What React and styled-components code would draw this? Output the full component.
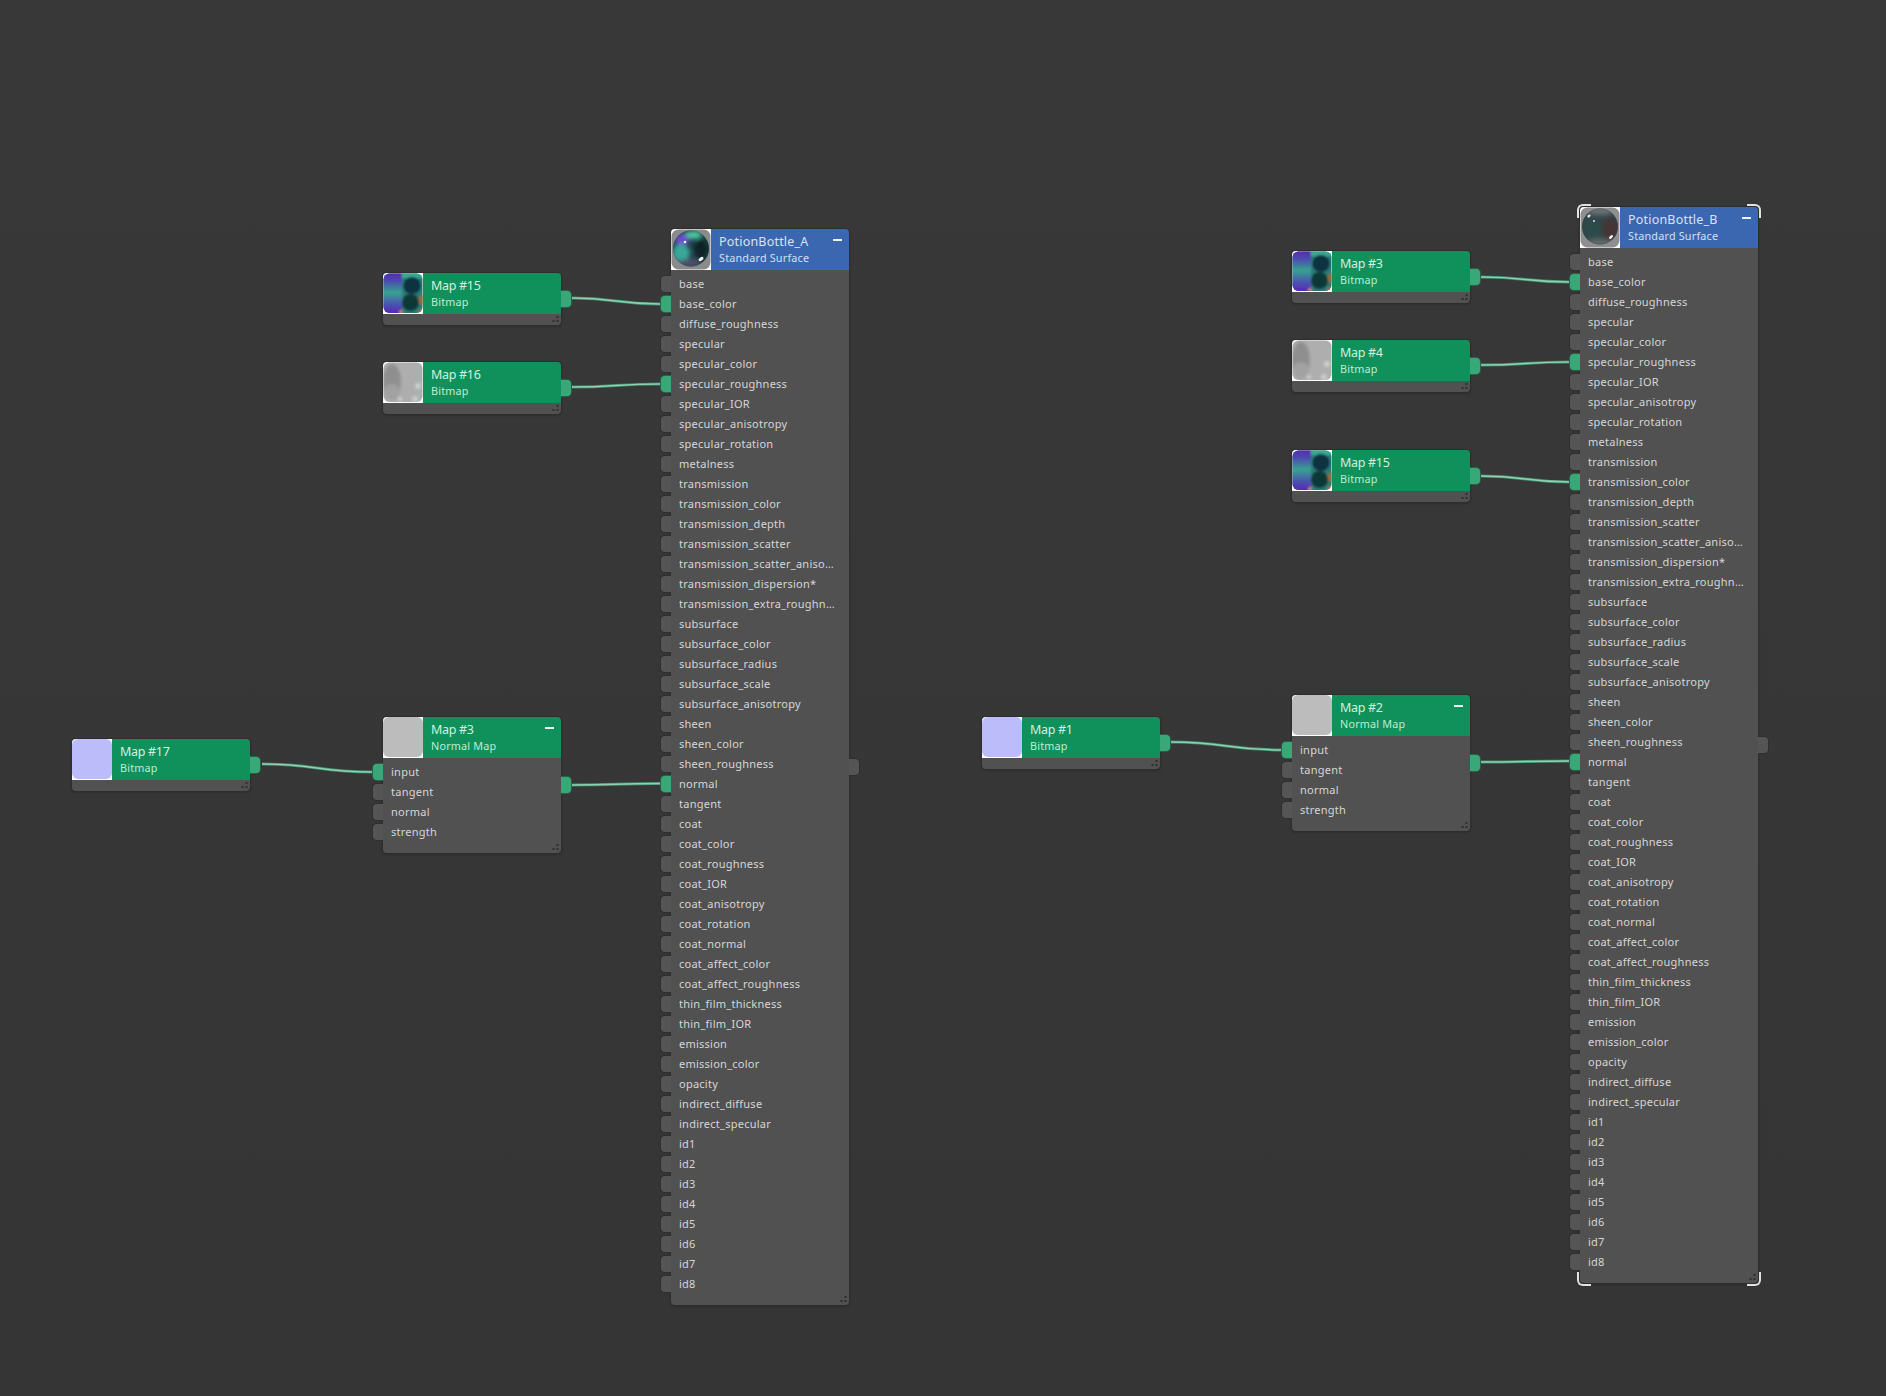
import React from "react";
import styled, { createGlobalStyle } from "styled-components";

const Global = createGlobalStyle`
  html, body { margin: 0; padding: 0; background: #363636; }
  * { box-sizing: border-box; }
`;

const Canvas = styled.div`
  position: relative;
  width: 1886px;
  height: 1396px;
  overflow: hidden;
  background: linear-gradient(#383838, #353535);
  font-family: "Noto Sans", "Open Sans", sans-serif;
`;

const WireLayer = styled.svg`
  position: absolute;
  left: 0;
  top: 0;
  width: 1886px;
  height: 1396px;
`;

const NodeBox = styled.div`
  position: absolute;
  left: ${(p) => p.$x}px;
  top: ${(p) => p.$y}px;
  width: 178px;
  display: flex;
  flex-direction: column;
  background: #515151;
  border-radius: 4px;
  box-shadow: 0 0 0 1px #2e2e2e, 0 1px 3px rgba(0, 0, 0, 0.35);
`;

const Header = styled.div`
  position: relative;
  display: flex;
  align-items: stretch;
  height: 41px;
  border-radius: 4px 4px 0 0;
  overflow: hidden;
  background: ${(p) => (p.$kind === "surface" ? "#3b66b0" : "#10905a")};
`;

const Thumb = styled.svg`
  display: block;
  flex: none;
  width: 40px;
  height: 41px;
`;

const Titles = styled.div`
  display: flex;
  flex-direction: column;
  justify-content: center;
  padding: 0 0 1px 8px;
  min-width: 0;
`;

const Title = styled.div`
  font-size: 12.5px;
  line-height: 17px;
  white-space: nowrap;
  letter-spacing: ${(p) => (p.$kind === "surface" ? "0.2px" : "-0.3px")};
  color: ${(p) => (p.$kind === "surface" ? "#d6e4f6" : "#d2f0e0")};
`;

const Subtitle = styled.div`
  font-size: 10.8px;
  line-height: 15px;
  letter-spacing: 0.2px;
  white-space: nowrap;
  color: ${(p) => (p.$kind === "surface" ? "#d3e0f3" : "#bdeed3")};
`;

const Collapse = styled.span`
  position: absolute;
  top: 10px;
  right: 7px;
  width: 9px;
  height: 2px;
  background: #eef4f2;
`;

const Body = styled.div`
  display: flex;
  flex-direction: column;
  padding: 4px 0 10.5px;
`;

const Footer = styled.div`
  height: 11px;
`;

const Row = styled.div`
  position: relative;
  height: 20px;
  line-height: 20px;
  padding: 0 14px 0 8px;
  font-size: 11px;
  letter-spacing: 0.25px;
  color: #d6d6d6;
`;

const RowLabel = styled.div`
  overflow: hidden;
  white-space: nowrap;
  text-overflow: ellipsis;
`;

const Port = styled.span`
  position: absolute;
  top: 50%;
  margin-top: -8px;
  width: 10px;
  height: 16px;
  background: ${(p) => (p.$on ? "#38a878" : "#555555")};
  box-shadow: 0 0 0 1px ${(p) => (p.$on ? "#2a5f4a" : "#2f2f2f")};
  ${(p) =>
    p.$side === "in"
      ? "left: -10px; border-radius: 4px 0 0 4px; clip-path: inset(-2px 0 -2px -2px);"
      : "right: -10px; border-radius: 0 4px 4px 0; clip-path: inset(-2px -2px -2px 0);"}
`;

const Grip = styled.svg`
  position: absolute;
  right: 1px;
  bottom: 1px;
  width: 9px;
  height: 9px;
`;

const Bracket = styled.span`
  position: absolute;
  width: 14px;
  height: 14px;
  border: 0 solid #e2e2e2;
  ${(p) => (p.$v === "t" ? "top: -3px; border-top-width: 2px;" : "bottom: -3px; border-bottom-width: 2px;")}
  ${(p) => (p.$h === "l" ? "left: -3px; border-left-width: 2px;" : "right: -3px; border-right-width: 2px;")}
  border-${(p) => (p.$v === "t" ? "top" : "bottom")}-${(p) => (p.$h === "l" ? "left" : "right")}-radius: 6px;
`;

const ATTRS = [
  "base", "base_color", "diffuse_roughness", "specular", "specular_color", "specular_roughness",
  "specular_IOR", "specular_anisotropy", "specular_rotation", "metalness", "transmission",
  "transmission_color", "transmission_depth", "transmission_scatter", "transmission_scatter_aniso…",
  "transmission_dispersion*", "transmission_extra_roughn…", "subsurface", "subsurface_color",
  "subsurface_radius", "subsurface_scale", "subsurface_anisotropy", "sheen", "sheen_color",
  "sheen_roughness", "normal", "tangent", "coat", "coat_color", "coat_roughness", "coat_IOR",
  "coat_anisotropy", "coat_rotation", "coat_normal", "coat_affect_color", "coat_affect_roughness",
  "thin_film_thickness", "thin_film_IOR", "emission", "emission_color", "opacity", "indirect_diffuse",
  "indirect_specular", "id1", "id2", "id3", "id4", "id5", "id6", "id7", "id8",
];
const NORMAL_MAP = ["input", "tangent", "normal", "strength"];

function BitmapColor({ id }) {
  return (
    <Thumb viewBox="0 0 40 41">
      <defs>
        <clipPath id={`${id}c`}><rect x="0.5" y="0.5" width="39" height="39.5" rx="6" /></clipPath>
        <filter id={`${id}b`} x="-30%" y="-30%" width="160%" height="160%"><feGaussianBlur stdDeviation="1.3" /></filter>
        <linearGradient id={`${id}g`} x1="0" y1="0" x2="0" y2="1">
          <stop offset="0.04" stopColor="#5a22b0" />
          <stop offset="0.25" stopColor="#4a50ae" />
          <stop offset="0.48" stopColor="#36a48e" />
          <stop offset="0.72" stopColor="#4a55b0" />
          <stop offset="0.96" stopColor="#5a1fb5" />
        </linearGradient>
      </defs>
      <rect width="40" height="41" fill="#fff" />
      <g clipPath={`url(#${id}c)`}>
        <rect width="40" height="41" fill="#2b7a78" />
        <g filter={`url(#${id}b)`}>
          <rect x="16" y="-2" width="26" height="7" fill="#3aa890" />
          <circle cx="40" cy="27" r="5" fill="#9a6a42" />
          <circle cx="39" cy="40" r="4" fill="#b5683a" />
          <rect x="-1" y="-3" width="20" height="47" fill={`url(#${id}g)`} />
          <circle cx="29" cy="12.5" r="8.5" fill="#0c3040" />
          <circle cx="27.5" cy="29.5" r="8.5" fill="#0d3838" />
          <circle cx="18" cy="39" r="2" fill="#d08a5a" />
        </g>
      </g>
    </Thumb>
  );
}

function BitmapGray({ id }) {
  return (
    <Thumb viewBox="0 0 40 41">
      <defs>
        <clipPath id={`${id}c`}><rect x="0.5" y="0.5" width="39" height="39.5" rx="6" /></clipPath>
        <filter id={`${id}b`} x="-30%" y="-30%" width="160%" height="160%"><feGaussianBlur stdDeviation="1.5" /></filter>
      </defs>
      <rect width="40" height="41" fill="#fff" />
      <g clipPath={`url(#${id}c)`}>
        <rect width="40" height="41" fill="#aeaeae" />
        <g filter={`url(#${id}b)`}>
          <ellipse cx="9" cy="20" rx="9" ry="18" fill="#8f8f8f" />
          <ellipse cx="9" cy="30" rx="8" ry="8" fill="#a2a2a2" />
          <circle cx="35" cy="24" r="3" fill="#d0d0d0" />
          <circle cx="17" cy="37" r="2" fill="#d4d4d4" />
          <circle cx="32" cy="37" r="3" fill="#cdcdcd" />
        </g>
      </g>
    </Thumb>
  );
}

function Flat({ color }) {
  return (
    <Thumb viewBox="0 0 40 41">
      <rect width="40" height="41" fill="#ffffff" />
      <rect x="0" y="0" width="40" height="40" rx="6" fill={color} />
    </Thumb>
  );
}

function SphereA({ id }) {
  return (
    <Thumb viewBox="0 0 40 41">
      <defs>
        <clipPath id={`${id}c`}><circle cx="20" cy="19.5" r="18" /></clipPath>
        <filter id={`${id}b`} x="-40%" y="-40%" width="180%" height="180%"><feGaussianBlur stdDeviation="2" /></filter>
      </defs>
      <rect width="40" height="41" fill="#fff" />
      <rect x="0.5" y="0.5" width="39" height="40" rx="7" fill="#8b8b8b" />
      <g clipPath={`url(#${id}c)`}>
        <rect width="40" height="41" fill="#1f4048" />
        <g filter={`url(#${id}b)`}>
          <ellipse cx="22" cy="6" rx="9" ry="4" fill="#4cc8a2" />
          <ellipse cx="11" cy="11" rx="7" ry="6" fill="#6a4cd0" />
          <ellipse cx="10" cy="24" rx="9" ry="9" fill="#38a898" />
          <ellipse cx="30" cy="20" rx="7" ry="10" fill="#0c2228" />
          <ellipse cx="19" cy="34" rx="11" ry="4" fill="#50506a" />
        </g>
      </g>
      <circle cx="14" cy="13" r="1.3" fill="#f2f6ff" />
      <ellipse cx="30" cy="30" rx="2.8" ry="1.6" transform="rotate(-35 30 30)" fill="#f4f4f4" />
    </Thumb>
  );
}

function SphereB({ id }) {
  return (
    <Thumb viewBox="0 0 40 41">
      <defs>
        <clipPath id={`${id}c`}><circle cx="20" cy="19.5" r="18" /></clipPath>
        <filter id={`${id}b`} x="-40%" y="-40%" width="180%" height="180%"><feGaussianBlur stdDeviation="2.8" /></filter>
      </defs>
      <rect width="40" height="41" fill="#fff" />
      <rect x="0.5" y="0.5" width="39" height="40" rx="7" fill="#8f8f8f" />
      <g clipPath={`url(#${id}c)`}>
        <rect width="40" height="41" fill="#33424a" />
        <g filter={`url(#${id}b)`}>
          <ellipse cx="13" cy="23" rx="9" ry="12" fill="#2b4c4a" />
          <ellipse cx="30" cy="22" rx="8" ry="11" fill="#443634" />
          <ellipse cx="20" cy="4" rx="14" ry="4" fill="#6a7478" />
          <ellipse cx="20" cy="36" rx="13" ry="4" fill="#666a6c" />
        </g>
      </g>
      <ellipse cx="9" cy="9" rx="1.8" ry="1.2" transform="rotate(-40 9 9)" fill="#e8eeee" />
      <circle cx="14" cy="14" r="1" fill="#dfe8ea" />
      <ellipse cx="31" cy="30" rx="2.4" ry="1.3" transform="rotate(-40 31 30)" fill="#f4f4f4" />
    </Thumb>
  );
}

const ResizeGrip = () => (
  <Grip viewBox="0 0 9 9">
    <g fill="#2f2f2f">
      <rect x="5.5" y="1" width="2" height="2" />
      <rect x="1.5" y="5" width="2" height="2" />
      <rect x="5.5" y="5" width="2" height="2" />
    </g>
  </Grip>
);

function Node({ x, y, kind, title, subtitle, thumb, rows, linked = [], outOn, selected, collapse }) {
  return (
    <NodeBox $x={x} $y={y}>
      <Header $kind={kind}>
        {thumb}
        <Titles>
          <Title $kind={kind}>{title}</Title>
          <Subtitle $kind={kind}>{subtitle}</Subtitle>
        </Titles>
        {collapse && <Collapse />}
      </Header>
      {rows ? (
        <Body>
          {rows.map((r) => (
            <Row key={r}>
              <Port $side="in" $on={linked.includes(r)} />
              <RowLabel>{r}</RowLabel>
            </Row>
          ))}
        </Body>
      ) : (
        <Footer />
      )}
      <Port $side="out" $on={outOn} />
      <ResizeGrip />
      {selected &&
        ["t", "b"].map((v) =>
          ["l", "r"].map((h) => <Bracket key={v + h} $v={v} $h={h} />)
        )}
    </NodeBox>
  );
}

const WIRES = [
  [572, 298, 660, 304],
  [572, 387, 660, 384],
  [262, 764, 372, 772],
  [572, 785, 660, 783.5],
  [1481, 277, 1570, 282],
  [1481, 365, 1570, 362],
  [1481, 476, 1570, 482],
  [1171, 742, 1282, 750],
  [1481, 762, 1570, 761],
];

function Wires() {
  return (
    <WireLayer viewBox="0 0 1886 1396">
      {WIRES.map(([x1, y1, x2, y2], i) => {
        const m = (x1 + x2) / 2;
        const d = `M${x1} ${y1} C${m} ${y1} ${m} ${y2} ${x2} ${y2}`;
        return (
          <g key={i} fill="none">
            <path d={d} stroke="#3f8f70" strokeWidth="3" />
            <path d={d} stroke="#8fd0b4" strokeWidth="1.5" />
          </g>
        );
      })}
    </WireLayer>
  );
}

export default function App() {
  return (
    <Canvas>
      <Global />
      <Wires />
      <Node x={383} y={273} kind="map" title="Map #15" subtitle="Bitmap" thumb={<BitmapColor id="a" />} outOn />
      <Node x={383} y={362} kind="map" title="Map #16" subtitle="Bitmap" thumb={<BitmapGray id="b" />} outOn />
      <Node x={72} y={739} kind="map" title="Map #17" subtitle="Bitmap" thumb={<Flat color="#bdbcfb" />} outOn />
      <Node x={383} y={717} kind="map" title="Map #3" subtitle="Normal Map" thumb={<Flat color="#bcbcbc" />} rows={NORMAL_MAP} linked={["input"]} outOn collapse />
      <Node x={671} y={229} kind="surface" title="PotionBottle_A" subtitle="Standard Surface" thumb={<SphereA id="c" />} rows={ATTRS} linked={["base_color", "specular_roughness", "normal"]} collapse />
      <Node x={1292} y={251} kind="map" title="Map #3" subtitle="Bitmap" thumb={<BitmapColor id="d" />} outOn />
      <Node x={1292} y={340} kind="map" title="Map #4" subtitle="Bitmap" thumb={<BitmapGray id="e" />} outOn />
      <Node x={1292} y={450} kind="map" title="Map #15" subtitle="Bitmap" thumb={<BitmapColor id="f" />} outOn />
      <Node x={982} y={717} kind="map" title="Map #1" subtitle="Bitmap" thumb={<Flat color="#bdbcfb" />} outOn />
      <Node x={1292} y={695} kind="map" title="Map #2" subtitle="Normal Map" thumb={<Flat color="#bcbcbc" />} rows={NORMAL_MAP} linked={["input"]} outOn collapse />
      <Node x={1580} y={207} kind="surface" title="PotionBottle_B" subtitle="Standard Surface" thumb={<SphereB id="g" />} rows={ATTRS} linked={["base_color", "specular_roughness", "transmission_color", "normal"]} selected collapse />
    </Canvas>
  );
}
